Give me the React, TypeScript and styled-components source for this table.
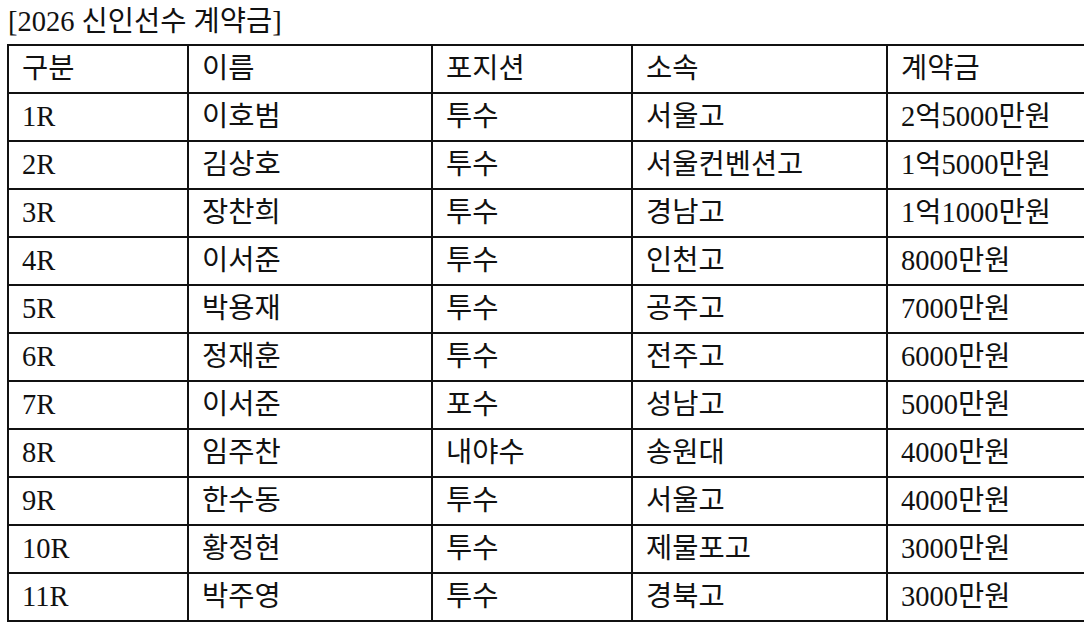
import React from "react";
import styled, { createGlobalStyle } from "styled-components";

const GlobalStyle = createGlobalStyle`
  html, body {
    margin: 0;
    padding: 0;
    background: #ffffff;
    overflow: hidden;
  }
  body {
    font-family: "Liberation Serif", "Noto Sans CJK KR", serif;
    color: #111;
  }
`;

const Page = styled.div`
  padding: 0 0 0 7px;
  width: 1400px;
`;

const Title = styled.div`
  font-size: 28.5px;
  line-height: 44px;
  height: 44px;
  padding-left: 1px;
  white-space: nowrap;
`;

const Table = styled.table`
  border-collapse: collapse;
  table-layout: fixed;
  width: 1290px;
  font-size: 28.5px;
`;

const Cell = styled.td`
  border: 2px solid #111;
  height: 46px;
  padding: 0 0 0 13px;
  vertical-align: middle;
  white-space: nowrap;
  line-height: 46px;
`;

const columns = [
  { title: "구분", width: 180 },
  { title: "이름", width: 244 },
  { title: "포지션", width: 200 },
  { title: "소속", width: 255 },
  { title: "계약금", width: 411 },
];

const rows: string[][] = [
  ["1R", "이호범", "투수", "서울고", "2억5000만원"],
  ["2R", "김상호", "투수", "서울컨벤션고", "1억5000만원"],
  ["3R", "장찬희", "투수", "경남고", "1억1000만원"],
  ["4R", "이서준", "투수", "인천고", "8000만원"],
  ["5R", "박용재", "투수", "공주고", "7000만원"],
  ["6R", "정재훈", "투수", "전주고", "6000만원"],
  ["7R", "이서준", "포수", "성남고", "5000만원"],
  ["8R", "임주찬", "내야수", "송원대", "4000만원"],
  ["9R", "한수동", "투수", "서울고", "4000만원"],
  ["10R", "황정현", "투수", "제물포고", "3000만원"],
  ["11R", "박주영", "투수", "경북고", "3000만원"],
];

export default function App() {
  return (
    <Page>
      <GlobalStyle />
      <Title>[2026 신인선수 계약금]</Title>
      <Table>
        <colgroup>
          {columns.map((c) => (
            <col key={c.title} style={{ width: c.width }} />
          ))}
        </colgroup>
        <tbody>
          <tr>
            {columns.map((c) => (
              <Cell key={c.title}>{c.title}</Cell>
            ))}
          </tr>
          {rows.map((r, i) => (
            <tr key={i}>
              {r.map((v, j) => (
                <Cell key={j}>{v}</Cell>
              ))}
            </tr>
          ))}
        </tbody>
      </Table>
    </Page>
  );
}
